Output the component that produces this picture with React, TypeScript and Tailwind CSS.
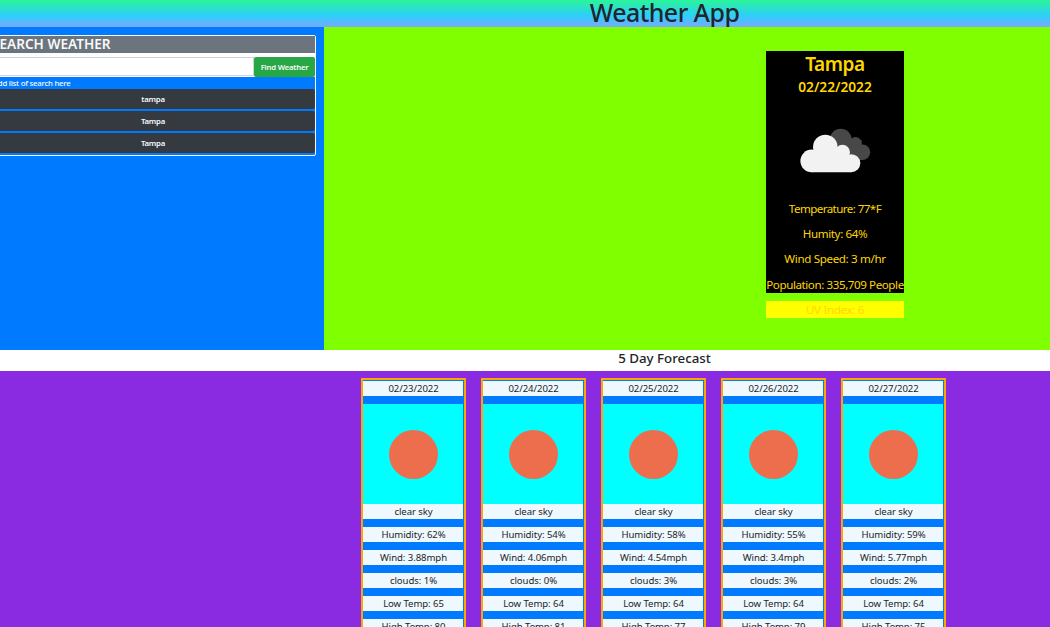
import React from "react";

const days = [
  { date: "02/23/2022", humidity: 62, wind: "3.88", clouds: 1, low: 65, high: 80 },
  { date: "02/24/2022", humidity: 54, wind: "4.06", clouds: 0, low: 64, high: 81 },
  { date: "02/25/2022", humidity: 58, wind: "4.54", clouds: 3, low: 64, high: 77 },
  { date: "02/26/2022", humidity: 55, wind: "3.4", clouds: 3, low: 64, high: 79 },
  { date: "02/27/2022", humidity: 59, wind: "5.77", clouds: 2, low: 64, high: 75 },
];

function CloudIcon() {
  return (
    <svg className="block h-[100px] w-[100px]" viewBox="0 0 100 100">
      <g fill="#484849">
        <circle cx="55.7" cy="39.7" r="11" />
        <circle cx="70.5" cy="43" r="6" />
        <circle cx="77.5" cy="52.3" r="7.7" />
        <path d="M55 40h21.5l1 20H62z" />
      </g>
      <g fill="#f2f2f2">
        <circle cx="26.7" cy="60.9" r="11.3" />
        <circle cx="40.3" cy="47" r="12.3" />
        <circle cx="57.5" cy="52.2" r="7.5" />
        <circle cx="66.3" cy="63.2" r="9" />
        <path d="M26.7 72.2V52h32l7.600 8v12.2z" />
      </g>
    </svg>
  );
}

function Line({ children }: { children: React.ReactNode }) {
  return (
    <p className="mb-2 h-[15px] w-[100px] whitespace-nowrap bg-[#f0f8ff] pl-px text-center text-[9.6px] leading-[15px] tracking-[-0.08px]">
      {children}
    </p>
  );
}

export default function App() {
  return (
    <div className="flex h-[627px] w-[1050px] flex-col overflow-hidden bg-white font-['Noto_Sans','Open_Sans',sans-serif] text-[#212529]">
      <header className="h-[27px] shrink-0 bg-[linear-gradient(#2af598_0%,#2ccffb_58%,#79a9ff_100%)] pl-[279px]">
        <h1 className="text-center text-[25px] leading-[25px] font-medium tracking-[-0.55px]">Weather App</h1>
      </header>

      <main className="flex h-[323px] shrink-0">
        <aside className="w-[324px] bg-[#007bff] pt-2">
          <section className="-ml-[10px] flex h-[121px] w-[326px] flex-col rounded-[2px] border border-[#f8f9fa] text-[#f8f9fa]">
            <h2 className="h-[17px] shrink-0 bg-[#6c757d] pl-px text-[13.6px] leading-[15px] font-semibold">
              SEARCH WEATHER
            </h2>
            <div className="flex h-6 shrink-0 bg-white pt-1">
              <input aria-label="City" className="h-[19px] min-w-0 flex-1 border border-[#ced4da] bg-white outline-none" />
              <button className="h-5 w-[61px] rounded-[2px] bg-[#28a745] pt-px text-[7.8px] font-semibold tracking-[-0.26px] whitespace-nowrap">Find Weather</button>
            </div>
            <p className="h-3 shrink-0 pl-[2px] text-[7.8px] leading-[12px] font-medium tracking-[-0.24px]">Add list of search here</p>
            <div className="flex flex-col gap-[2px]">
              {["tampa", "Tampa", "Tampa"].map((city, i) => (
                <button key={i} className="h-5 rounded-[2px] bg-[#343a40] pt-px text-[7.8px] font-semibold tracking-[-0.25px]">{city}</button>
              ))}
            </div>
          </section>
        </aside>

        <section className="flex flex-1 justify-end bg-[#7fff00] pt-6 pr-[146px]">
          <div className="w-[138px] text-center whitespace-nowrap text-[#ffd700]">
            <div className="h-[242px] bg-black">
              <h2 className="h-[27px] text-[19px] leading-[27px] font-semibold tracking-[-0.4px]">Tampa</h2>
              <h3 className="h-[19px] text-[13.7px] leading-[17px] font-semibold">02/22/2022</h3>
              <div className="flex h-[103px] justify-center pt-[3px]"><CloudIcon /></div>
              <div className="flex flex-col text-[11.6px]">
                <p className="h-[25px] leading-[18px] tracking-[-0.57px]">Temperature: 77*F</p>
                <p className="h-[25px] leading-[18px] tracking-[-0.37px]">Humity: 64%</p>
                <p className="h-[26px] leading-[18px] tracking-[-0.35px]">Wind Speed: 3 m/hr</p>
                <p className="h-[17px] leading-[17px] tracking-[-0.42px]">Population: 335,709 People</p>
              </div>
            </div>
            <p className="mt-2 h-[17px] bg-[#ffff00] text-[11.6px] leading-[17px] tracking-[-0.35px]">UV Index: 6</p>
          </div>
        </section>
      </main>

      <h2 className="h-[21px] shrink-0 pl-[279px] text-center text-[13.3px] leading-[17px] font-medium">5 Day Forecast</h2>

      <section className="flex flex-1 gap-[15px] bg-[#8a2be2] pt-[7px] pl-[361px]">
        {days.map((day) => (
          <article key={day.date} className="h-[300px] w-[105px] shrink-0 border-2 border-[#ffa500] bg-[#007bff] pt-px">
            <Line>{day.date}</Line>
            <div className="flex h-[100px] w-[100px] items-center justify-center bg-[#00ffff]">
              <svg className="h-[100px] w-[100px]" viewBox="0 0 100 100">
                <circle cx="50.5" cy="50.5" r="24.5" fill="#ec6e4c" />
              </svg>
            </div>
            <Line>clear sky</Line>
            <Line>Humidity: {day.humidity}%</Line>
            <Line>Wind: {day.wind}mph</Line>
            <Line>clouds: {day.clouds}%</Line>
            <Line>Low Temp: {day.low}</Line>
            <Line>High Temp: {day.high}</Line>
          </article>
        ))}
      </section>
    </div>
  );
}
